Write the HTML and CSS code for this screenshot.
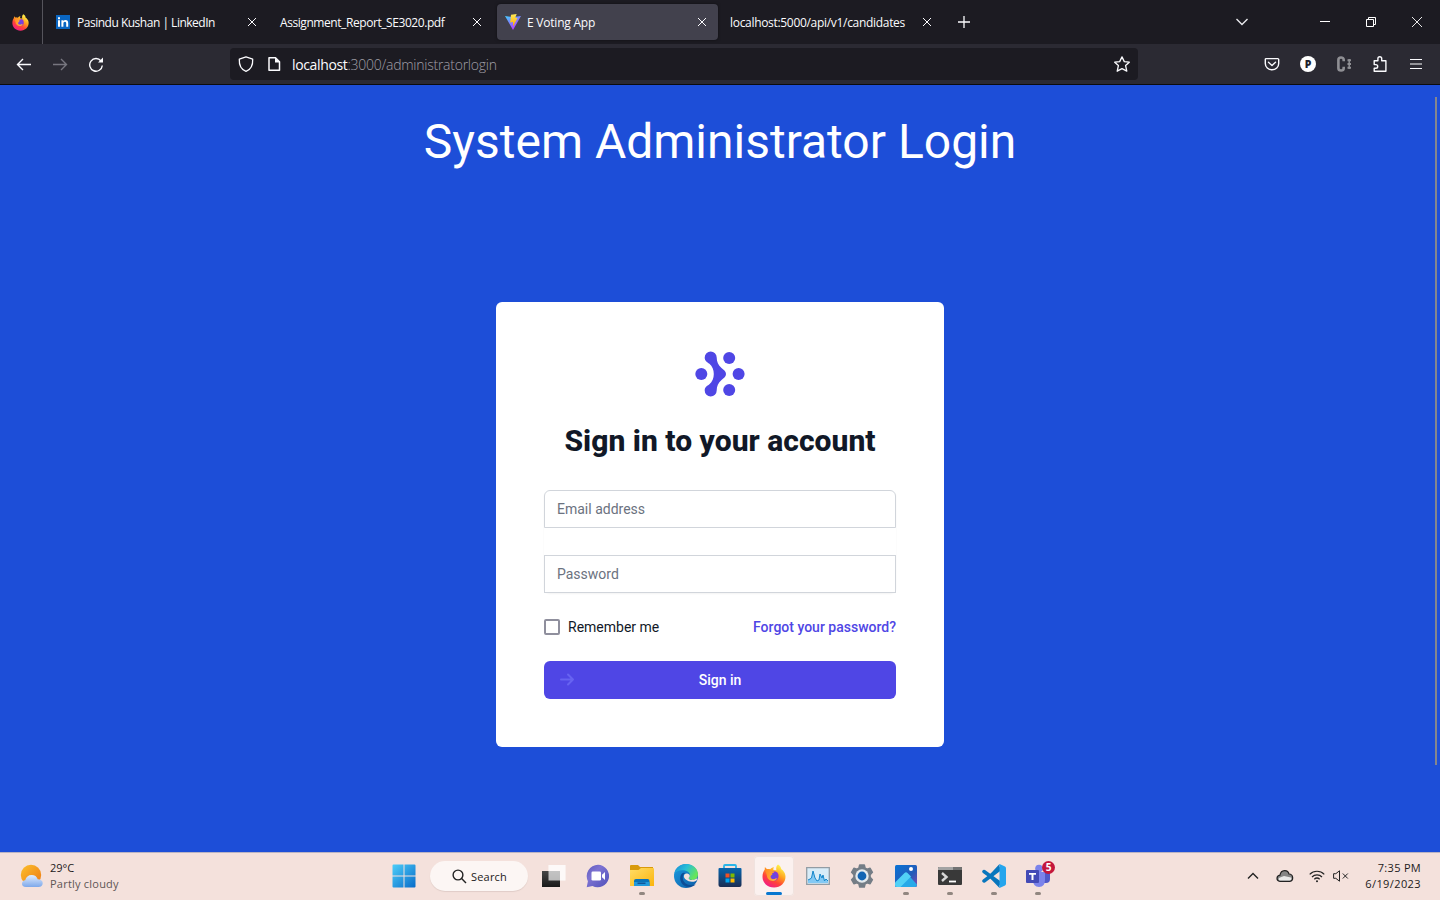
FILE: index.html
```html
<!DOCTYPE html>
<html lang="en">
<head>
<meta charset="utf-8">
<title>E Voting App</title>
<link rel="stylesheet" href="styles.css">
</head>
<body>
<svg class="defs" width="0" height="0" aria-hidden="true">
  <defs>
    <linearGradient id="fxBody" x1="0.8" y1="0.1" x2="0.25" y2="1"><stop offset="0" stop-color="#fff04a"/><stop offset=".35" stop-color="#ffa01e"/><stop offset=".65" stop-color="#ff4338"/><stop offset="1" stop-color="#f0188e"/></linearGradient>
    <radialGradient id="fxGlobe"><stop offset="0" stop-color="#5b50e0"/><stop offset=".6" stop-color="#7a3fe0"/><stop offset="1" stop-color="#9035d0"/></radialGradient>
    <linearGradient id="fxFace" x1="0" y1="0" x2="1" y2=".4"><stop offset="0" stop-color="#ff8a20"/><stop offset="1" stop-color="#ffb03a"/></linearGradient>
    <symbol id="firefox" viewBox="0 0 24 24">
      <path fill="url(#fxBody)" d="M16 .5c2.300 1.400 3.100 3 3.300 4.700 1.200.5 2.200 1.800 2.700 2.700.6.4 1.500 2.800 1.500 4.900 0 6.200-5 10.700-11.400 10.700C5.400 23.500.5 18.800.5 12.700c0-3.500 1.300-5.800 2.200-6.900l.2-2.800 2.200 2.200c1-.3 2.100-.3 3.100 0C9.500 3.700 11 3.300 11.900 3.300c-.5.9-.7 1.700-.5 2.600l3 .3C13.800 3.800 14.500 1.600 16 .5z"/>
      <circle cx="11.800" cy="12" r="4.800" fill="url(#fxGlobe)"/>
      <path fill="url(#fxFace)" d="M3 5.500c2-.8 4.700-.3 6 1.500l3.500.5c-.5 1.500-2.400 1.500-2.600 2.300l.6 1c-1.200.4-1.900 1-1.900 2 0 1.600 1.500 2.500 3 2.300 1.300-.1 2.100-1 3.400-.8-.8 1.900-2.500 2.700-4.200 2.600C7.500 16.900 4.900 14.500 4.800 11z"/>
    </symbol>
    <symbol id="close" viewBox="0 0 10 10"><path d="M1 1l8 8M9 1L1 9" stroke="#fbfbfe" stroke-width="1" fill="none"/></symbol>
    <linearGradient id="viteA" x1="0" y1="0" x2=".6" y2="1"><stop offset="0" stop-color="#41d1ff"/><stop offset="1" stop-color="#bd34fe"/></linearGradient>
    <linearGradient id="viteB" x1="0" y1="0" x2="0" y2="1"><stop offset="0" stop-color="#ffea55"/><stop offset="1" stop-color="#ffa800"/></linearGradient>
    <linearGradient id="win" gradientUnits="userSpaceOnUse" x1="0" y1="0" x2="24" y2="24"><stop offset="0" stop-color="#4fd0fa"/><stop offset="1" stop-color="#0669c8"/></linearGradient>
    <linearGradient id="dark" x1="0" y1="0" x2="0" y2="1"><stop offset="0" stop-color="#464646"/><stop offset="1" stop-color="#191919"/></linearGradient>
    <linearGradient id="chat" x1="0" y1="0" x2="1" y2="1"><stop offset="0" stop-color="#5c59bd"/><stop offset=".35" stop-color="#7e73d2"/><stop offset="1" stop-color="#4f50ba"/></linearGradient>
    <linearGradient id="folder" x1="0" y1="0" x2="1" y2="1"><stop offset="0" stop-color="#ffdd67"/><stop offset="1" stop-color="#fbb40c"/></linearGradient>
    <linearGradient id="edgeTop" x1="0" y1="0" x2="1" y2=".5"><stop offset="0" stop-color="#1686d7"/><stop offset=".5" stop-color="#29bfd6"/><stop offset="1" stop-color="#67e55a"/></linearGradient>
    <linearGradient id="edgeLow" x1="0" y1="0" x2="1" y2="1"><stop offset="0" stop-color="#1b9de2"/><stop offset="1" stop-color="#0c59a4"/></linearGradient>
    <linearGradient id="store" x1="0" y1="0" x2="0" y2="1"><stop offset="0" stop-color="#0665ae"/><stop offset="1" stop-color="#1b2d52"/></linearGradient>
    <linearGradient id="photo" x1="0" y1="0" x2="1" y2="1"><stop offset="0" stop-color="#0873d5"/><stop offset=".6" stop-color="#245bb8"/><stop offset="1" stop-color="#8448b0"/></linearGradient>
    <linearGradient id="sun" x1="0" y1="0" x2="1" y2="1"><stop offset="0" stop-color="#fbc02d"/><stop offset="1" stop-color="#ee7813"/></linearGradient>
    <linearGradient id="cloud" x1="0" y1="0" x2="0" y2="1"><stop offset="0" stop-color="#e1edff"/><stop offset="1" stop-color="#7da8ea"/></linearGradient>
  </defs>
</svg>

<header class="browser">
  <div class="tabbar">
    <div class="fx-view"><svg width="17" height="17"><use href="#firefox"/></svg></div>
    <div class="tab">
      <svg class="favicon" width="16" height="16" viewBox="0 0 16 16"><path fill="#0a66c2" d="M1 1h14v14H1z"/><path fill="#fff" d="M3 6.200h2v6.600H3zM3 3.200h2v2H3zM6.400 6.200h2v.9c.5-.7 1.200-1.100 2.100-1.100 1.900 0 2.700 1.200 2.700 3.200v3.600h-2V9.500c0-1.100-.3-1.800-1.200-1.800-1 0-1.600.7-1.600 1.900v3.200h-2z"/></svg>
      <span class="label t1">Pasindu Kushan | LinkedIn</span><svg class="x" width="10" height="10"><use href="#close"/></svg>
    </div>
    <div class="tab"><span class="label t2">Assignment_Report_SE3020.pdf</span><svg class="x" width="10" height="10"><use href="#close"/></svg></div>
    <div class="tab active">
      <svg class="favicon" width="16" height="16" viewBox="0 0 16 16"><path fill="url(#viteA)" d="M0 2l8 1 8-1-8 14z"/><path fill="url(#viteB)" d="M6 .8L11.700.1 10.200 3.800 12.500 4.100 8 12.500V8L5.200 8.500z"/></svg>
      <span class="label t3">E Voting App</span><svg class="x" width="10" height="10"><use href="#close"/></svg>
    </div>
    <div class="tab"><span class="label t4">localhost:5000/api/v1/candidates</span><svg class="x" width="10" height="10"><use href="#close"/></svg></div>
    <svg class="plus" width="12" height="12" viewBox="0 0 12 12"><path d="M6 0v12M0 6h12" stroke="#fbfbfe" stroke-width="1.300"/></svg>
    <div class="window-controls">
      <svg width="14" height="10" viewBox="0 0 14 10"><path d="M1.500 2l5.500 5.500L12.500 2" stroke="#e8e8ec" stroke-width="1.400" fill="none"/></svg>
      <svg class="min" width="10" height="10" viewBox="0 0 10 10"><path d="M0 4.500h10" stroke="#fff"/></svg>
      <svg class="max" width="10" height="10" viewBox="0 0 10 10"><path d="M.5 2.500h7v7h-7zM2.500 2V.5h7v7H8" stroke="#fff" fill="none"/></svg>
      <svg class="quit" width="10" height="10" viewBox="0 0 10 10"><path d="M0 0l10 10M10 0L0 10" stroke="#fff" stroke-width=".9"/></svg>
    </div>
  </div>
  <div class="navbar">
    <div class="nav-buttons">
      <svg width="16" height="16" viewBox="0 0 16 16" fill="none" stroke="#fbfbfe" stroke-width="1.400"><path d="M15 8.500H1.500M7 3L1.500 8.500 7 14"/></svg>
      <svg width="16" height="16" viewBox="0 0 16 16" fill="none" stroke="#77767f" stroke-width="1.400"><path d="M1 8.500h13.500M9 3L14.500 8.500 9 14"/></svg>
      <svg width="16" height="16" viewBox="0 0 16 16" fill="none" stroke="#fbfbfe" stroke-width="1.400"><path d="M13 5A6.300 6.300 0 1 0 14.300 9.500"/><path d="M15 1.500v5h-5z" fill="#fbfbfe" stroke="none"/></svg>
    </div>
    <div class="urlbar">
      <svg width="16" height="16" viewBox="0 0 16 16" fill="none" stroke="#fbfbfe" stroke-width="1.300"><path stroke-linejoin="round" d="M8 .8L14.700 3.200C15 9 13.200 13.300 8 15.300 2.800 13.300 1 9 1.300 3.200z"/></svg>
      <svg width="16" height="16" viewBox="0 0 16 16" fill="none" stroke="#fbfbfe" stroke-width="1.500"><path stroke-linejoin="round" d="M3 1.800h6.500L13.500 5.800v8.500H3z"/><path d="M9 1.500v5h5z" fill="#fbfbfe" stroke="none"/></svg>
      <span class="url"><b>localhost</b>:3000/administratorlogin</span>
      <svg class="star" width="16" height="16" viewBox="0 0 16 16" fill="none" stroke="#fbfbfe" stroke-width="1.300" stroke-linejoin="round"><path d="M8 .9l2.300 4.700 5 .6-3.700 3.400 1.200 5.600L8 12.700l-4.800 2.500 1.200-5.600L.7 6.200l5-.6z"/></svg>
    </div>
    <div class="extensions">
      <svg width="16" height="16" viewBox="0 0 16 16" fill="none" stroke="#fbfbfe" stroke-width="1.400" stroke-linejoin="round"><path d="M2.200 2.600h11.600c.5 0 .9.400.9.900V7.400c0 3.800-3 6.300-6.700 6.300S1.300 11.200 1.300 7.400V3.500c0-.5.4-.9.9-.9z"/><path d="M4.500 6.300L8 9.600l3.500-3.300" stroke-linecap="round"/></svg>
      <span class="profile">P</span>
      <svg width="16" height="16" viewBox="0 0 16 16"><path d="M7.700 5.300V3.700C7.700.7 2.400.7 2.400 3.700v8.600c0 3 5.300 3 5.300 0v-1.600" fill="none" stroke="#8f8f94" stroke-width="2.600"/><path d="M13.200 3v10" stroke="#8f8f94" stroke-width="1.500"/><path fill="#8f8f94" d="M11.500 3.300h3.500v2h-3.500zM11.500 7h3.500v2h-3.500zM11.500 10.700h3.500v2h-3.500z"/></svg>
      <svg width="16" height="16" viewBox="0 0 16 16" fill="none" stroke="#fbfbfe" stroke-width="1.400" stroke-linejoin="round"><path d="M2.200 4.700h3.700V2.600a1.900 1.900 0 0 1 3.800 0v2.100h4.200v10.600H2.200v-3.100h1.700a1.800 1.800 0 0 0 0-3.600H2.200z"/></svg>
      <svg width="16" height="16" viewBox="0 0 16 16" stroke="#fbfbfe" stroke-width="1.200"><path d="M2 3.500h12M2 8h12M2 12.500h12"/></svg>
    </div>
  </div>
</header>

<main class="page">
  <h1>System Administrator Login</h1>
  <section class="card">
    <svg class="logo" width="54" height="48" viewBox="0 0 54 48" fill="#4f46e5"><circle cx="8.300" cy="24" r="6"/><circle cx="36.200" cy="7.900" r="6"/><circle cx="45.600" cy="24" r="6"/><circle cx="36.200" cy="40.100" r="6"/><path d="M11.700 7.500a6 6 0 0 1 12 0c0 4.500 1.500 7.500 4.800 10.500 2.500 2.300 4.500 3.200 4.500 6s-2 3.700-4.500 6c-3.300 3-4.800 6-4.800 10.500a6 6 0 0 1-12 0c0-3.500 2.300-4.500 4.700-6.300C19.300 32 20.800 28 20.800 24s-1.500-8-4.400-10.200C14 12 11.700 11 11.700 7.500z"/></svg>
    <h2>Sign in to your account</h2>
    <form>
      <div class="fields"><input class="field first" type="email" placeholder="Email address"><input class="field" type="password" placeholder="Password"></div>
      <div class="options"><label><input class="check" type="checkbox"><span>Remember me</span></label><a>Forgot your password?</a></div>
      <button type="button"><svg width="16" height="14" viewBox="0 0 16 14" fill="none" stroke="#6763f1" stroke-width="2" stroke-linecap="round" stroke-linejoin="round"><path d="M2 6.500h12M9 1.500l5 5-5 5"/></svg><span>Sign in</span></button>
    </form>
  </section>
  <div class="scroll-thumb"></div>
</main>

<footer class="taskbar">
  <div class="weather">
    <svg width="24" height="24" viewBox="0 0 24 24"><circle cx="11" cy="11" r="10.200" fill="url(#sun)"/><path fill="url(#cloud)" d="M6 23c-3 0-4-1.500-4-3.200 0-2 1.400-3.300 3.200-3.500C6 13 8.300 11 11.700 11c3 0 5.200 1.500 6 4.300 3.300 0 5 1.700 5 3.900S21 23 18.500 23z"/></svg>
    <div><p class="temp">29°C</p><p class="sky">Partly cloudy</p></div>
  </div>
  <div class="apps">
    <div class="app start"><svg width="24" height="24" viewBox="0 0 24 24" fill="url(#win)"><path d="M.5 1.500Q.5.5 1.500.5H11.500V11.500H.5zM12.500.5H22.500Q23.500.5 23.500 1.500V11.500H12.500zM.5 12.500H11.500V23.500H1.500Q.5 23.500.5 22.500zM12.500 12.500H23.500V22.500Q23.500 23.500 22.500 23.500H12.500z"/></svg></div>
    <div class="search"><svg width="15" height="15" viewBox="0 0 15 15" fill="none" stroke="#222" stroke-width="1.400"><circle cx="6" cy="6" r="4.900"/><path d="M9.600 9.600L14 14"/></svg><span>Search</span></div>
    <div class="app"><svg width="24" height="24" viewBox="0 0 24 24"><path fill="url(#dark)" d="M0 7h18v16H0z"/><path fill="#fff" fill-opacity=".68" d="M6.500 1H23.500V16.500H6.500z"/><path fill="#fff" fill-opacity=".4" d="M6.500 1H23.500V16.500H18V7H6.500z"/></svg></div>
    <div class="app"><svg width="24" height="24" viewBox="0 0 24 24"><path fill="url(#chat)" d="M12 .7A11.300 11.300 0 1 1 6.500 22L.7 23.300l1.200-6A11.500 11.500 0 0 1 12 .7z"/><rect x="5.500" y="7.500" width="9.500" height="9" rx="1.300" fill="#fff"/><path fill="#fff" d="M16 10.800L19 8v8l-3-2.800z"/></svg></div>
    <div class="app run"><svg width="26" height="24" viewBox="0 0 26 24"><path fill="#d99a0b" d="M1 2q0-1 1-1h7l2 2h13v5H1z"/><path fill="url(#folder)" d="M1 6h8.500l2.500-2h12q1 0 1 1v17H1z"/><path fill="#0872b9" d="M5 22v-5q0-2 2-2h11.500q2 0 2 2v5z"/><path fill="#2099dc" d="M5 22v-4h15.500v4z"/><path fill="#10569a" d="M8.500 18.500h8V20h-8z"/></svg></div>
    <div class="app"><svg width="24" height="24" viewBox="0 0 24 24"><circle cx="12" cy="12" r="12" fill="url(#edgeLow)"/><path fill="url(#edgeTop)" d="M.3 9.500C1.500 4 6.200 0 12 0c6.700 0 12 4.800 12 10.200 0 3.600-2.500 5.700-5.600 5.700-2.300 0-4.100-.8-3.800-1.900.3-.7 1.300-1.300 1.300-2.700C15.900 8 12 6.200 8 6.300 4.500 6.300 1.800 7.600.3 9.500z"/><path fill="#0d4d96" d="M9.500 8.800C4.700 10.300 5.300 19 10.500 21.800c3.700 2 8.300 1.500 11.300-1.500-5.700 2.600-13.200-.5-13-6.800 0-2.200 1-3.800 2.700-4.500z"/><path fill="#f4e2dc" d="M9.900 12c.4-2.200 2-2.800 3.500-2.400 1.600.4 2.500 1.300 2.400 2.500-.1 1-1.200 1.500-1.100 2.300.2 1.500 4 2.300 7.500.3.800-.4 1.400.2.900 1-1.200 1.700-3.200 2.200-5.300 2-4.200-.2-8.200-2.800-7.900-5.700z"/></svg></div>
    <div class="app"><svg width="24" height="24" viewBox="0 0 24 24"><path d="M6 6V2q0-1 1-1h10q1 0 1 1v4" fill="none" stroke="#2ab5e8" stroke-width="1.800"/><path fill="url(#store)" d="M.5 5q0-1 1-1h21q1 0 1 1v16q0 2-2 2h-19q-2 0-2-2z"/><path fill="#f25022" d="M7.500 9.500h4v4h-4z"/><path fill="#7fba00" d="M12.500 9.500h4v4h-4z"/><path fill="#00a4ef" d="M7.500 14.500h4v4h-4z"/><path fill="#ffb900" d="M12.500 14.500h4v4h-4z"/></svg></div>
    <div class="app current"><svg width="24" height="24"><use href="#firefox"/></svg></div>
    <div class="app"><svg width="24" height="24" viewBox="0 0 24 24"><path fill="#d8ecf8" stroke="#929ca4" stroke-width="1.300" d="M.7 3.700h22.600v16.600H.7z"/><path fill="#83c9f4" d="M2 16l2-1 1.500-1L7 7l2 7 2 3 2-1 1-6 2 4 1-3 1.500 6L20 15l2 2v2H2z"/><path d="M2 16l2-1 1.500-1L7 7l2 7 2 3 2-1 1-6 2 4 1-3 1.500 6L20 15l2 2" fill="none" stroke="#1586ca"/></svg></div>
    <div class="app"><svg width="24" height="24" viewBox="0 0 24 24"><path fill="#747d86" stroke="#747d86" stroke-width="1.500" stroke-linejoin="round" d="M9.700 1h4.600l.8 3.100 2 1.100 3-.9 2.300 4-2.300 2.300v2.800l2.300 2.300-2.300 4-3-.9-2 1.100-.8 3.100H9.700l-.8-3.100-2-1.100-3 .9-2.300-4 2.300-2.300v-2.800L1.600 8.300l2.300-4 3 .9 2-1.100z"/><circle cx="12" cy="12" r="6.700" fill="#e4eaed"/><circle cx="12" cy="12" r="4.400" fill="#1265b4"/></svg></div>
    <div class="app run"><svg width="24" height="24" viewBox="0 0 24 24"><rect x="1" y="1" width="22" height="22" rx="1.500" fill="url(#photo)"/><path fill="#27a9e8" d="M1 20.500L10.500 10q1.500-1.600 3 0L23 20.500q0 2.500-2 2.500H3q-2 0-2-2.500z"/><path fill="#51d1f6" d="M1 18.500L10.500 9q1.500-1.500 3 0L17 12.500 6.500 23H3q-2 0-2-2z"/><circle cx="17" cy="5" r="2" fill="#fff"/></svg></div>
    <div class="app run"><svg width="24" height="24" viewBox="0 0 24 24"><path fill="#393939" d="M0 4q0-1 1-1h22q1 0 1 1v16q0 1-1 1H1q-1 0-1-1z"/><path fill="#a3a3a3" d="M0 4q0-1 1-1h14v3H0z"/><path fill="#727272" d="M15 3h8q1 0 1 1v2h-9z"/><path d="M4 9l4.500 4L4 17" stroke="#d8d8d8" stroke-width="2.400" fill="none"/><path d="M11 17.500h7" stroke="#fff" stroke-width="1.800"/></svg></div>
    <div class="app run"><svg width="24" height="24" viewBox="0 0 24 24"><path d="M18.500 4.500L2 17M18.500 19.500L2 7.500" stroke="#0876bd" stroke-width="3.500" stroke-linecap="round"/><path fill="#0876bd" d="M17.500 0v5.500L8 12.800 4.500 14zM17.500 24v-5.500L8 11l-3 0z"/><path fill="#25a5ed" d="M17.500 0l5 2.300q1.500.7 1.500 2v15.400q0 1.300-1.500 2l-5 2.300z"/></svg></div>
    <div class="app run"><div class="teams"><svg width="24" height="24" viewBox="0 0 24 24"><circle cx="13" cy="4.500" r="3.800" fill="#7b83eb"/><path fill="#5059c9" d="M16 8h8v7q0 4-4 4h-4z"/><path fill="#7b83eb" d="M7 8h12v8q0 7-6 7t-6-7z"/><rect y="6" width="13" height="13" rx="1" fill="#434ab6"/><path fill="#fff" d="M3 9h7v1.700H7.500V16h-2v-5.300H3z"/></svg><span class="badge">5</span></div></div>
  </div>
  <div class="tray">
    <svg width="12" height="8" viewBox="0 0 12 8"><path d="M1 6.500l5-5 5 5" fill="none" stroke="#222" stroke-width="1.400"/></svg>
    <svg class="onedrive" width="18" height="14" viewBox="0 0 18 14"><path fill="#858585" stroke="#222" stroke-width="1.200" d="M4 12.300C-.2 11.700.2 6.800 4 6.200 5 0 12 .5 13 5c4.500.3 5 6.500.8 7.300z"/><path fill="#e9e9e9" d="M3.500 11.500C2 10.500 2.500 9 4 8.600l4-1.500 7 1.500c1 1.500.2 3-1.500 3z"/></svg>
    <svg class="wifi" width="16" height="14" viewBox="0 0 16 14" fill="none" stroke="#222" stroke-width="1.200"><path d="M.7 5.300a10.300 10.300 0 0 1 14.600 0M3 8a7 7 0 0 1 10 0M5.300 10.300a3.900 3.900 0 0 1 5.400 0"/><circle cx="8" cy="12.200" r="1" fill="#222" stroke="none"/></svg>
    <svg class="sound" width="16" height="12" viewBox="0 0 16 12" fill="none" stroke="#222" stroke-width="1"><path d="M.6 3.700h2.200L6.500.8v10.400L2.800 8.300H.6zM9.800 3.500l5 5M14.800 3.500l-5 5"/></svg>
    <div class="clock"><p class="time">7:35 PM</p><p class="date">6/19/2023</p></div>
  </div>
</footer>
</body>
</html>
```
FILE: styles.css
```css
* { box-sizing: border-box; }
body { margin: 0; width: 1440px; height: 900px; overflow: hidden; display: flex; flex-direction: column; font-family: "Open Sans", "Noto Sans", sans-serif; }
svg { display: block; flex: none; }
.defs { position: absolute; }
p, h1, h2 { margin: 0; }

.browser { height: 85px; background: #2b2a33; border-bottom: 1px solid #0c0c0d; }
.tabbar { height: 44px; display: flex; align-items: center; background: #1c1b22; color: #fbfbfe; }
.fx-view { width: 43px; height: 44px; border-right: 1px solid #55545c; display: flex; align-items: center; padding-left: 12px; margin-right: 4px; }
.tab { width: 221px; height: 36px; margin-right: 4px; border-radius: 4px; display: flex; align-items: center; padding: 0 11px 0 8px; font-size: 12px; white-space: nowrap; }
.tab.active { background: #42414d; box-shadow: 0 0 3px rgba(0, 0, 0, .5); }
.favicon { margin-right: 6px; }
.label { line-height: 18px; padding-top: 2px; }
.x { margin-left: auto; }
.t1 { letter-spacing: -.49px; }
.t2 { letter-spacing: -.43px; }
.t3 { letter-spacing: -.22px; }
.t4 { letter-spacing: -.31px; }
.plus { margin-left: 11px; }
.window-controls { margin-left: auto; display: flex; align-items: center; padding-right: 18px; }
.min { margin-left: 71px; }
.max { margin-left: 36px; }
.quit { margin-left: 36px; }
.navbar { height: 40px; display: flex; align-items: center; }
.nav-buttons { width: 230px; display: flex; gap: 20px; padding-left: 16px; }
.urlbar { width: 908px; height: 32px; border-radius: 4px; background: #1c1b22; display: flex; align-items: center; padding: 0 8px; }
.urlbar svg + svg { margin-left: 12px; }
.url { margin-left: 10px; font-size: 14px; font-weight: 300; letter-spacing: -.25px; color: #a09fa7; }
.url b { font-weight: 400; letter-spacing: -.36px; color: #fbfbfe; }
.urlbar .star { margin-left: auto; }
.extensions { margin-left: auto; padding-right: 16px; display: flex; gap: 20px; }
.profile { width: 16px; height: 16px; border-radius: 50%; background: #fff; color: #22212a; font-size: 10.5px; font-weight: 800; line-height: 16px; text-align: center; }

.page { position: relative; height: 767px; background: #1d4ed8; display: flex; flex-direction: column; align-items: center; font-family: Roboto, sans-serif; }
h1 { margin-top: 33px; font-size: 48px; line-height: 48px; font-weight: 400; color: #fff; white-space: nowrap; }
.card { margin-top: 136px; width: 448px; height: 445px; padding: 48px; background: #fff; border-radius: 6px; display: flex; flex-direction: column; align-items: center; }
h2 { margin-top: 25px; font-size: 30px; line-height: 36px; font-weight: 800; color: #111827; letter-spacing: .03px; white-space: nowrap; }
form { width: 352px; margin-top: 31px; }
.fields { display: flex; flex-direction: column; gap: 27px; box-shadow: 0 1px 2px rgba(0, 0, 0, .05); border-radius: 6px; }
.field { appearance: none; width: 352px; height: 38px; margin: 0; padding: 8px 12px; border: 1px solid #d1d5db; border-radius: 0; background: #fff; font: 14px/20px Roboto, sans-serif; outline: 0; }
.field.first { border-radius: 6px 6px 0 0; }
.field::placeholder { color: #6b7280; opacity: 1; }
.options { height: 20px; margin: 24px 0; display: flex; align-items: center; justify-content: space-between; font-size: 14px; line-height: 20px; }
label { display: flex; align-items: center; gap: 8px; color: #111827; }
.check { appearance: none; width: 16px; height: 16px; margin: 0; border: 2px solid #8f8f9d; border-radius: 2px; background: #fff; }
.options a { color: #4f46e5; font-weight: 500; }
button { width: 352px; height: 38px; padding: 0 15px; border: 0; border-radius: 6px; background: #4f46e5; color: #fff; font: 500 14px/20px Roboto, sans-serif; display: grid; grid-template-columns: 16px 1fr 16px; align-items: center; }
.scroll-thumb { position: absolute; top: 12px; right: 3px; width: 2px; height: 668px; background: #85868d; }

.taskbar { height: 48px; padding-bottom: 1px; background: #f4e1dc; border-top: 1px solid #bab4c4; display: flex; align-items: center; color: #1c1a1a; font-size: 11px; }
.taskbar p { line-height: 16px; white-space: nowrap; }
.weather { width: 385px; padding-left: 20px; display: flex; align-items: center; gap: 6px; }
.sky { color: #5e5654; letter-spacing: .22px; }
.apps { display: flex; align-items: center; }
.app { position: relative; width: 40px; height: 40px; margin-right: 4px; display: grid; place-items: center; }
.app.start { margin-left: -1px; }
.search { width: 98px; height: 30px; margin: 0 6px 0 2px; border-radius: 15px; background: #fcf6f4; box-shadow: 0 1px 1px #e0cdc8; display: flex; align-items: center; padding-left: 22px; gap: 4px; }
.search span { padding-top: 1px; letter-spacing: .2px; }
.app.current { background: #fbf1ef; border-radius: 4px; box-shadow: inset 0 0 0 1px #f0e3df; }
.app.run::after, .app.current::after { content: ""; position: absolute; bottom: 1px; left: 17px; width: 6px; height: 3px; border-radius: 2px; background: #918680; }
.app.current::after { left: 12px; width: 16px; background: #0877d0; }
.teams { position: relative; }
.badge { position: absolute; left: 16px; top: -3px; width: 13px; height: 13px; border-radius: 50%; background: #c4163b; color: #fff; font-size: 10px; font-weight: 700; line-height: 13px; text-align: center; }
.tray { margin-left: auto; padding-right: 19px; display: flex; align-items: center; }
.onedrive { margin-left: 17px; }
.wifi { margin-left: 15px; }
.sound { margin-left: 8px; }
.clock { width: 72px; text-align: right; }
.time { letter-spacing: .3px; }
.date { letter-spacing: .4px; }
```
